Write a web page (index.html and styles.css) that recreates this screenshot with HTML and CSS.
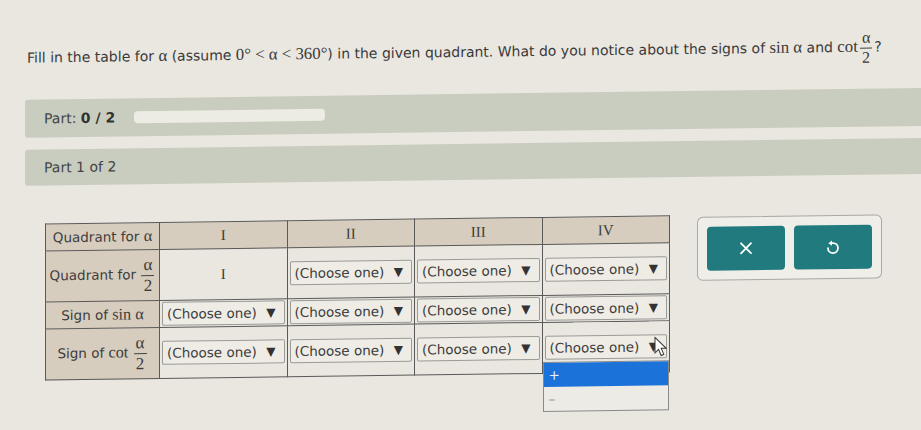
FILE: index.html
```html
<!DOCTYPE html>
<html lang="en">
<head>
    <meta charset="UTF-8">
    <title>Part 1 of 2</title>
    <link rel="stylesheet" href="styles.css">
</head>
<body>
    <div class="page">
        <p class="question">
            Fill in the table for <span class="m">α</span> (assume <span class="m">0° &lt; α &lt; 360°</span>) in the given quadrant. What do you notice about the signs of <span class="m">sin α</span> and <span class="m">cot</span><span class="frac"><span class="num">α</span><span class="den">2</span></span>?
        </p>

        <div class="progress-bar">
            <span>Part: <b>0 / 2</b></span>
            <div class="track"></div>
        </div>

        <div class="part-head">Part 1 of 2</div>

        <div class="part-body">
            <table class="grid">
                <tr class="head">
                    <th class="label">Quadrant for <span class="m">α</span></th>
                    <th class="roman">I</th>
                    <th class="roman">II</th>
                    <th class="roman">III</th>
                    <th class="roman">IV</th>
                </tr>
                <tr class="tall">
                    <th class="label">Quadrant for <span class="frac"><span class="num">α</span><span class="den">2</span></span></th>
                    <td class="roman">I</td>
                    <td><div class="select">(Choose one)<span class="caret">▼</span></div></td>
                    <td><div class="select">(Choose one)<span class="caret">▼</span></div></td>
                    <td><div class="select">(Choose one)<span class="caret">▼</span></div></td>
                </tr>
                <tr class="short">
                    <th class="label">Sign of <span class="m">sin α</span></th>
                    <td><div class="select">(Choose one)<span class="caret">▼</span></div></td>
                    <td><div class="select">(Choose one)<span class="caret">▼</span></div></td>
                    <td><div class="select">(Choose one)<span class="caret">▼</span></div></td>
                    <td><div class="select">(Choose one)<span class="caret">▼</span></div></td>
                </tr>
                <tr class="tall">
                    <th class="label">Sign of <span class="m">cot</span> <span class="frac"><span class="num">α</span><span class="den">2</span></span></th>
                    <td><div class="select">(Choose one)<span class="caret">▼</span></div></td>
                    <td><div class="select">(Choose one)<span class="caret">▼</span></div></td>
                    <td><div class="select">(Choose one)<span class="caret">▼</span></div></td>
                    <td class="open">
                        <div class="select">(Choose one)<span class="caret">▼</span></div>
                        <ul class="menu">
                            <li class="active">+</li>
                            <li>–</li>
                        </ul>
                        <svg class="cursor" width="14" height="21" viewBox="0 0 14 21">
                            <path d="M1 1 L1 16.5 L4.6 13 L7.2 19.2 L9.8 18.1 L7.2 12 L12.2 12 Z" fill="#fff" stroke="#333" stroke-width="1"/>
                        </svg>
                    </td>
                </tr>
            </table>

            <div class="tools">
                <button class="tool" type="button">
                    <svg width="14" height="14" viewBox="0 0 14 14"><path d="M2 2 L12 12 M12 2 L2 12" stroke="#fff" stroke-width="1.8" stroke-linecap="round"/></svg>
                </button>
                <button class="tool" type="button">
                    <svg width="16" height="17" viewBox="0 0 16 17"><path d="M6.5 4 H8 A5 5 0 1 1 3 9" fill="none" stroke="#fff" stroke-width="1.8" stroke-linecap="round"/><path d="M3.4 4 L7 1.3 L7 6.7 Z" fill="#fff"/></svg>
                </button>
            </div>
        </div>
    </div>
</body>
</html>
```

FILE: styles.css
```css
* {
    margin: 0;
    padding: 0;
    box-sizing: border-box;
}

html,
body {
    width: 921px;
    height: 430px;
    overflow: hidden;
}

body {
    font-family: 'DejaVu Sans', Verdana, sans-serif;
    background: #eae7e0;
    color: #333;
}

/* the screen was photographed at a slight angle */
.page {
    transform: skewY(-0.75deg);
    transform-origin: 0 0;
}

.m {
    font-family: 'Liberation Serif', 'DejaVu Serif', serif;
    font-size: 1.2em;
}

.frac {
    display: inline-flex;
    flex-direction: column;
    align-items: center;
    vertical-align: middle;
    font-family: 'Liberation Serif', serif;
    font-size: 1.15em;
    line-height: 1;
    margin: -12px 2px;
}

.frac .num {
    padding: 0 2px 2px;
    border-bottom: 1px solid #444;
}

.frac .den {
    padding-top: 1px;
}

.question {
    padding: 45px 0 0 27px;
    font-size: 14px;
    line-height: 26px;
    height: 100px;
    color: #3a3a3a;
}

.progress-bar {
    margin-left: 25px;
    height: 38px;
    background: #c9cdbf;
    border-radius: 3px 0 0 3px;
    display: flex;
    align-items: center;
    padding-left: 19px;
    font-size: 14px;
    color: #444;
}

.progress-bar b {
    color: #333;
}

.track {
    margin-left: 19px;
    width: 191px;
    height: 12px;
    border-radius: 4px;
    background: #ecebe4;
}

.part-head {
    margin: 12px 0 0 25px;
    height: 36px;
    background: #c9cdbf;
    border-radius: 3px 0 0 3px;
    padding-left: 19px;
    display: flex;
    align-items: center;
    font-size: 14px;
    color: #444;
}

.part-body {
    margin-left: 25px;
    padding: 38px 0 0 20px;
    display: flex;
    align-items: flex-start;
    gap: 27px;
    height: 234px;
}

.grid {
    border-collapse: collapse;
    font-size: 13.5px;
    color: #3c3c3c;
    table-layout: fixed;
    width: 625px;
    border: 1px solid #5a5a5a;
}

.grid th,
.grid td {
    border: 1px solid #5a5a5a;
    font-weight: normal;
    padding: 0 2px;
    text-align: center;
}

.grid tr.head {
    height: 27px;
}

.grid tr.tall {
    height: 51px;
}

.grid tr.short {
    height: 27px;
}

.grid th {
    background: #d7cdbe;
}

.grid td {
    background: #eae7e0;
}

.grid th.label {
    width: 114px;
    white-space: nowrap;
}

.grid .frac {
    font-size: 17px;
    margin: 0 1px;
}

.grid .roman {
    font-family: 'Liberation Serif', serif;
    font-size: 15px;
}

.select {
    display: flex;
    align-items: center;
    justify-content: space-between;
    height: 24px;
    padding: 0 8px 0 4px;
    background: #efece6;
    border: 1px solid #9a9a96;
    border-radius: 2px;
    white-space: nowrap;
}

.caret {
    font-size: 12px;
    color: #333;
}

.open {
    position: relative;
}

.menu {
    list-style: none;
    position: absolute;
    left: 0;
    right: 0;
    top: 39px;
    background: #ecebe6;
    border: 1px solid #8a8a88;
    z-index: 2;
    text-align: left;
}

.menu li {
    height: 24px;
    padding-left: 5px;
    line-height: 24px;
    color: #999;
}

.menu li.active {
    background: #1b72d8;
    color: #e8f0fa;
}

.cursor {
    position: absolute;
    right: 1px;
    top: 15px;
    z-index: 3;
}

.tools {
    margin-top: 2px;
    display: flex;
    gap: 9px;
    padding: 9px;
    background: #f0eee8;
    border: 1px solid #a8a8a4;
    border-radius: 6px;
}

.tool {
    width: 78px;
    height: 44px;
    border: none;
    border-radius: 4px;
    background: #217a7e;
    display: flex;
    align-items: center;
    justify-content: center;
}
```
